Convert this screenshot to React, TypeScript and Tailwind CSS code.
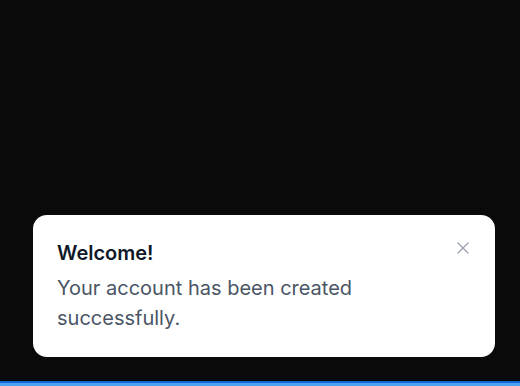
import { X } from 'lucide-react';

export default function App() {
  return (
    <div className="h-[386px] w-[520px] bg-[#0a0a0a] flex flex-col font-['Inter',sans-serif]">
      <div className="flex-1 flex flex-col justify-end pl-[33px] pr-[25px] pb-6">
        <div className="bg-white rounded-[14px] p-6 flex items-start gap-4">
          <div className="flex-1">
            <h2 className="text-xl leading-7 font-semibold text-gray-900">Welcome!</h2>
            <p className="mt-1.5 text-xl leading-[30px] text-gray-600">
              Your account has been created successfully.
            </p>
          </div>
          <button className="text-gray-400 -mt-px -mr-0.5">
            <X size={20} strokeWidth={1.5} />
          </button>
        </div>
      </div>
      <div className="h-[2px] bg-[#1463d4]" />
      <div className="h-[3px] bg-[#4aa2f2]" />
    </div>
  );
}
